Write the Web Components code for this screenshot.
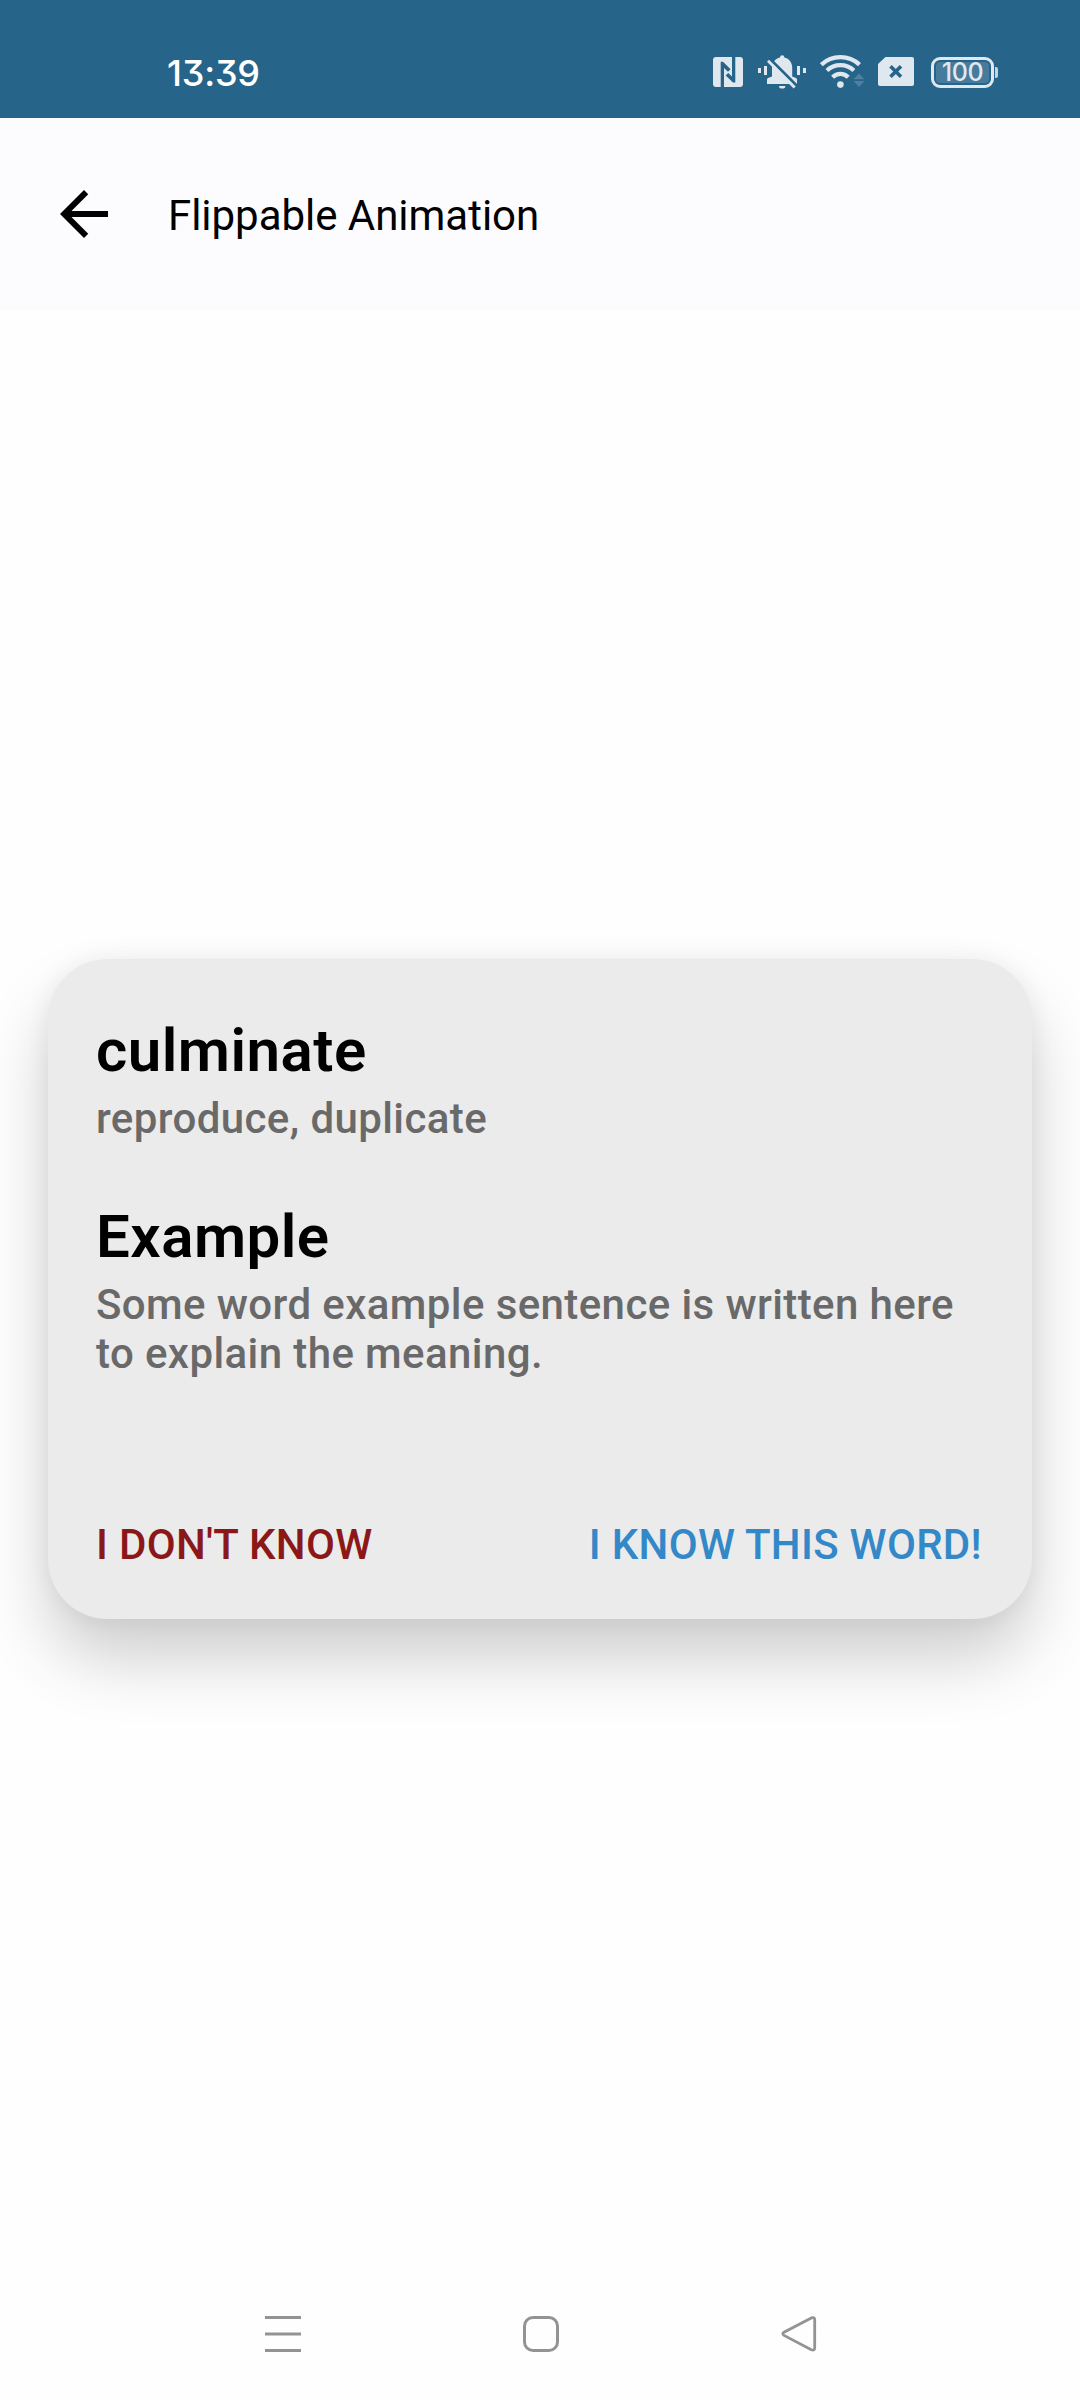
<!DOCTYPE html>
<html lang="en">
<head>
<meta charset="utf-8">
<title>Flippable Animation</title>
<style>
  body { margin: 0; background: #fefefe; font-family: Roboto, sans-serif; }
</style>
</head>
<body>
<app-screen>
  <status-bar slot="top" time="13:39" battery="100"></status-bar>
  <top-bar slot="top">Flippable Animation</top-bar>
  <word-card>
    <word-entry slot="entries" heading="culminate">reproduce, duplicate</word-entry>
    <word-entry slot="entries" heading="Example">Some word example sentence is written here to explain the meaning.</word-entry>
    <text-action slot="actions" kind="deny">I DON'T KNOW</text-action>
    <text-action slot="actions" kind="confirm">I KNOW THIS WORD!</text-action>
  </word-card>
  <nav-bar slot="bottom"></nav-bar>
</app-screen>

<script>
const define = (name, html, setup) => {
  const template = document.createElement('template');
  template.innerHTML = html;
  customElements.define(name, class extends HTMLElement {
    constructor() {
      super();
      this.attachShadow({ mode: 'open' }).append(template.content.cloneNode(true));
    }
    connectedCallback() { if (setup) setup(this, this.shadowRoot); }
  });
};

define('app-screen', `
  <style>
    :host { display: flex; flex-direction: column; height: 2400px; overflow: hidden; }
    main { flex: 1; display: flex; flex-direction: column; justify-content: center; padding: 0 48px; }
  </style>
  <slot name="top"></slot>
  <main><slot></slot></main>
  <slot name="bottom"></slot>`);

define('status-bar', `
  <style>
    :host { display: flex; box-sizing: border-box; height: 118px; padding: 26px 82px 0 167px;
            align-items: center; justify-content: space-between; background: #266489;
            font-family: Inter, sans-serif; color: #dfe8ef; }
    svg { display: block; }
    .time { padding-top: 1px; font-size: 36px; font-weight: 500; line-height: 44px; letter-spacing: -0.2px; color: #fff;
            font-feature-settings: "cv09"; }
    .icons { display: flex; align-items: center; }
    .bell { margin-left: 15px; }
    .wifi { margin-left: 14px; }
    .sim { margin-left: 14px; }
    .battery { display: flex; align-items: center; gap: 1px; margin-left: 17px; }
    .shell { box-sizing: border-box; width: 63px; height: 31px; padding: 2px; border: 3px solid #dfe8ef; border-radius: 9px; }
    .level { height: 100%; border-radius: 4px; background: #467b9b; display: flex;
             align-items: center; justify-content: center; font-size: 25px; font-weight: 500; line-height: 30px;
             letter-spacing: -0.4px; }
    .tip { width: 3px; height: 11px; border-radius: 0 2px 2px 0; background: #c5d5e0; }
  </style>
  <span class="time"></span>
  <div class="icons">
    <svg class="nfc" width="30" height="30" viewBox="0 0 30 30">
      <rect width="30" height="30" rx="3" fill="#dfe8ef"/>
      <path fill="#266489" d="M7.7 30V4.7H10L17.6 12.2 15 14.7 11 11V30zM22.3 0V25.6H20L12.7 18.5 15.2 16 19 19.5V0z"/>
    </svg>
    <svg class="bell" width="48" height="40" viewBox="0 0 48 40">
      <g fill="#dfe8ef">
        <path d="M0 16h3v5H0zM6 14h3v9H6zM39 14h3v9h-3zM45 16h3v5h-3z"/>
        <path d="M22 5.500a2.200 2.200 0 0 1 4.400 0C31 6.600 34.200 10.500 34.200 15.500V24.500L38 26q1 .5 1 1.500V32H9v-4.500q0-1 1-1.500l4-1.500v-9c0-5 3.500-9 8-10zM21 34h6.400a3.200 2.600 0 0 1-6.400 0z"/>
      </g>
      <path d="M11.500 6.500L40 35" stroke="#266489" stroke-width="3"/>
      <path d="M10 8.700L36.700 35.400" stroke="#dfe8ef" stroke-width="2.800"/>
    </svg>
    <svg class="wifi" width="44" height="40" viewBox="0 0 44 40">
      <g fill="none" stroke="#dfe8ef" stroke-width="4.200">
        <path d="M1.300 12.600A28.200 28.200 0 0 1 39.500 12.600"/>
        <path d="M6.900 18.600A19.600 19.600 0 0 1 33.900 18.600"/>
        <path d="M12.600 25.200A10.800 10.800 0 0 1 28.200 25.200"/>
      </g>
      <circle cx="20.400" cy="32.600" r="3.300" fill="#dfe8ef"/>
      <path fill="#4f80a0" d="M39 21.500L44.500 27.200H33.500zM33.500 29h11l-5.500 6z"/>
    </svg>
    <svg class="sim" width="36" height="30" viewBox="0 0 36 30">
      <path fill="#dfe8ef" d="M7.500 0H34a2 2 0 0 1 2 2V27a2 2 0 0 1-2 2H2a2 2 0 0 1-2-2V7z"/>
      <path d="M12.500 9.300L23 19.800M23 9.300L12.500 19.800" stroke="#266489" stroke-width="3.600"/>
    </svg>
    <div class="battery"><div class="shell"><div class="level"></div></div><div class="tip"></div></div>
  </div>`, (el, root) => {
  root.querySelector('.time').textContent = el.getAttribute('time');
  root.querySelector('.level').textContent = el.getAttribute('battery');
});

define('top-bar', `
  <style>
    :host { display: flex; box-sizing: border-box; height: 192px; padding-left: 48px; gap: 48px;
            align-items: center; background: #fcfcff; color: #000; }
    svg { display: block; }
    .title { padding-top: 3px; font-size: 42px; line-height: 49px; letter-spacing: -0.03px; }
  </style>
  <svg width="72" height="72" viewBox="0 0 24 24"><path d="M20 11H7.830l5.590-5.590L12 4l-8 8 8 8 1.410-1.410L7.830 13H20v-2z"/></svg>
  <div class="title"><slot></slot></div>`);

define('word-card', `
  <style>
    :host { display: flex; box-sizing: border-box; flex-direction: column; justify-content: space-between;
            height: 660px; padding: 56px 48px 50px; border-radius: 60px; background: #ebebeb;
            box-shadow: 0 40px 66px rgba(0,0,0,.19), 0 0 24px rgba(0,0,0,.06); }
    .entries { display: flex; flex-direction: column; gap: 58px; }
    .actions { display: flex; justify-content: space-between; padding-right: 2px; }
  </style>
  <div class="entries"><slot name="entries"></slot></div>
  <div class="actions"><slot name="actions"></slot></div>`);

define('word-entry', `
  <style>
    :host { display: flex; flex-direction: column; gap: 8px; font-weight: 500; }
    .heading { font-size: 60px; font-weight: 600; line-height: 71px; letter-spacing: .5px; color: #000; }
    .text { font-size: 42px; line-height: 49px; letter-spacing: .4px; color: #696969; }
  </style>
  <div class="heading"></div>
  <div class="text"><slot></slot></div>`, (el, root) => {
  root.querySelector('.heading').textContent = el.getAttribute('heading');
});

define('text-action', `
  <style>
    :host { display: block; font-size: 42px; font-weight: 500; line-height: 49px; letter-spacing: .3px; color: #8b1818; }
    :host([kind="confirm"]) { color: #3388c8; }
  </style>
  <slot></slot>`);

define('nav-bar', `
  <style>
    :host { display: flex; box-sizing: border-box; height: 132px; padding-left: 265px; gap: 222px; align-items: center; }
    svg { display: block; fill: none; stroke: #939393; stroke-width: 3; }
  </style>
  <svg width="36" height="36" viewBox="0 0 36 36"><path d="M0 1.500H36M0 18H36M0 34.500H36"/></svg>
  <svg width="36" height="36" viewBox="0 0 36 36"><rect x="1.500" y="1.500" width="33" height="33" rx="8.500"/></svg>
  <svg width="36" height="36" viewBox="0 0 36 36"><path stroke-width="2.800" d="M30.300 1.900L3 16.200Q.6 17.800 3 19.400L30.300 33.700Q33.700 35 33.700 31.500V4.100Q33.700.6 30.300 1.900z"/></svg>`);
</script>
</body>
</html>
